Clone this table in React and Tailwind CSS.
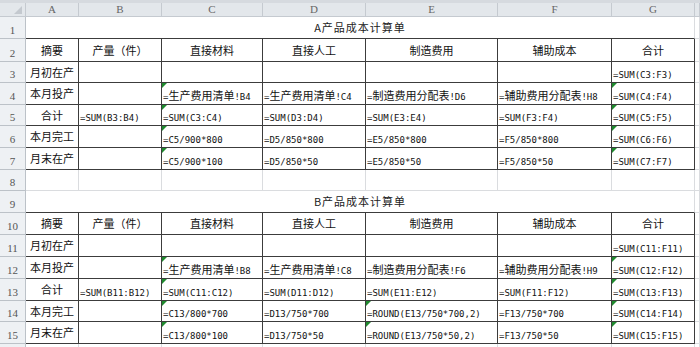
import { Fragment } from "react";

const COL_LETTERS = ["A", "B", "C", "D", "E", "F", "G", ""];

const HEAD = ["摘要", "产量（件）", "直接材料", "直接人工", "制造费用", "辅助成本", "合计"];

// each data row: [label, B..G], marks = column indexes that carry the green error corner
const TABLE_A = [
  { cells: ["月初在产", "", "", "", "", "", "=SUM(C3:F3)"], marks: [] },
  { cells: ["本月投产", "", "=生产费用清单!B4", "=生产费用清单!C4", "=制造费用分配表!D6", "=辅助费用分配表!H8", "=SUM(C4:F4)"], marks: [2, 6] },
  { cells: ["合计", "=SUM(B3:B4)", "=SUM(C3:C4)", "=SUM(D3:D4)", "=SUM(E3:E4)", "=SUM(F3:F4)", "=SUM(C5:F5)"], marks: [2, 6] },
  { cells: ["本月完工", "", "=C5/900*800", "=D5/850*800", "=E5/850*800", "=F5/850*800", "=SUM(C6:F6)"], marks: [2, 6] },
  { cells: ["月末在产", "", "=C5/900*100", "=D5/850*50", "=E5/850*50", "=F5/850*50", "=SUM(C7:F7)"], marks: [2, 6] },
];

const TABLE_B = [
  { cells: ["月初在产", "", "", "", "", "", "=SUM(C11:F11)"], marks: [] },
  { cells: ["本月投产", "", "=生产费用清单!B8", "=生产费用清单!C8", "=制造费用分配表!F6", "=辅助费用分配表!H9", "=SUM(C12:F12)"], marks: [2, 6] },
  { cells: ["合计", "=SUM(B11:B12)", "=SUM(C11:C12)", "=SUM(D11:D12)", "=SUM(E11:E12)", "=SUM(F11:F12)", "=SUM(C13:F13)"], marks: [2, 6] },
  { cells: ["本月完工", "", "=C13/800*700", "=D13/750*700", "=ROUND(E13/750*700,2)", "=F13/750*700", "=SUM(C14:F14)"], marks: [2, 4, 6] },
  { cells: ["月末在产", "", "=C13/800*100", "=D13/750*50", "=ROUND(E13/750*50,2)", "=F13/750*50", "=SUM(C15:F15)"], marks: [2, 4, 6] },
];

const CJK = '[font-family:"Noto_Sans_CJK_SC",sans-serif]';

function Formula({ text }) {
  const parts = text.split(/([\u4e00-\u9fff]+)/).filter(Boolean);
  return (
    <span className="whitespace-nowrap leading-none">
      {parts.map((p, i) =>
        /[\u4e00-\u9fff]/.test(p) ? (
          <span key={i} className={`text-[11px] ${CJK}`}>{p}</span>
        ) : (
          <span key={i} className='text-[9px] [font-family:"DejaVu_Sans_Mono",monospace]'>{p}</span>
        )
      )}
    </span>
  );
}

function ColHead({ children }) {
  return (
    <div className='flex items-center justify-center bg-[#e3e7eb] border-r border-b border-[#c5cad0] text-[11px] text-[#666] [font-family:"Liberation_Serif",serif] leading-none'>
      {children}
    </div>
  );
}

function RowHead({ n }) {
  return (
    <div className='flex items-end justify-center pb-[2px] overflow-hidden bg-[#eef1f4] border-r border-b border-[#bcc2c8] text-[11px] text-[#555] [font-family:"Liberation_Serif",serif] leading-none'>
      {n}
    </div>
  );
}

function Blank() {
  return <div className="bg-white border-r border-b border-[#dadcdf]" />;
}

function Title({ text }) {
  return (
    <>
      <div className={`col-span-7 flex items-center justify-center bg-white border-r border-b border-r-[#dadcdf] border-b-[#3c3c3c] text-[11px] tracking-[1px] text-[#222] ${CJK}`}>
        {text}
      </div>
      <Blank />
    </>
  );
}

function HeadRow() {
  return (
    <>
      {HEAD.map((h) => (
        <div key={h} className={`flex items-center justify-center bg-white border-r border-b border-[#3c3c3c] text-[11px] text-[#111] ${CJK}`}>
          {h}
        </div>
      ))}
      <Blank />
    </>
  );
}

function DataRow({ cells, marks }) {
  return (
    <>
      {cells.map((c, i) =>
        i === 0 ? (
          <div key={i} className={`flex items-center justify-center bg-white border-r border-b border-[#3c3c3c] text-[11px] text-[#111] ${CJK}`}>
            {c}
          </div>
        ) : (
          <div key={i} className="relative flex items-end pl-[1px] pb-[2px] overflow-hidden bg-white border-r border-b border-[#3c3c3c] text-[#111]">
            {marks.includes(i) && (
              <span className="absolute top-0 left-0 w-0 h-0 border-t-[5px] border-r-[5px] border-t-[#1f8a2e] border-r-transparent" />
            )}
            {c && <Formula text={c} />}
          </div>
        )
      )}
      <Blank />
    </>
  );
}

function EmptyRow() {
  return (
    <>
      {COL_LETTERS.map((_, i) => (
        <Blank key={i} />
      ))}
    </>
  );
}

export default function App() {
  return (
    <div className="w-[700px] h-[347px] overflow-hidden bg-white">
      <div className="h-[3px] bg-[#d6dadf]" />
      <div className="grid grid-cols-[26px_53px_83px_101px_103px_132px_114px_83px_1fr] grid-rows-[14px_22px_23px_21px_22px_21px_22px_22px_21px_22px_22px_22px_22px_22px_21px_22px_22px]">
        <div className="relative bg-[#e3e7eb] border-r border-b border-[#c5cad0]">
          <span className="absolute right-[3px] bottom-[2px] w-0 h-0 border-l-[8px] border-b-[8px] border-l-transparent border-b-[#c4c9cf]" />
        </div>
        {COL_LETTERS.map((l, i) => (
          <ColHead key={i}>{l}</ColHead>
        ))}

        <RowHead n={1} />
        <Title text="A产品成本计算单" />
        <RowHead n={2} />
        <HeadRow />
        {TABLE_A.map((r, i) => (
          <Fragment key={"a" + i}>
            <RowHead n={3 + i} />
            <DataRow {...r} />
          </Fragment>
        ))}
        <RowHead n={8} />
        <EmptyRow />
        <RowHead n={9} />
        <Title text="B产品成本计算单" />
        <RowHead n={10} />
        <HeadRow />
        {TABLE_B.map((r, i) => (
          <Fragment key={"b" + i}>
            <RowHead n={11 + i} />
            <DataRow {...r} />
          </Fragment>
        ))}
        {/* row 16 is only a sliver at the bottom edge */}
        <RowHead />
        <EmptyRow />
      </div>
    </div>
  );
}
